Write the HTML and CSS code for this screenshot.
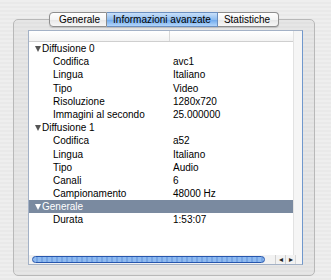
FILE: index.html
```html
<!DOCTYPE html>
<html lang="it">
<head>
  <meta charset="UTF-8">
  <title>Informazioni avanzate</title>
  <link rel="stylesheet" href="styles.css">
</head>
<body>
  <div class="panel">
    <div class="tabs">
      <span class="tab">Generale</span>
      <span class="tab active">Informazioni avanzate</span>
      <span class="tab">Statistiche</span>
    </div>

    <div class="table">
      <div class="table-body">
        <div class="content">
          <div class="header"><span class="hcol"></span><span></span></div>

          <div class="row group"><span class="key"><i class="arrow-down"></i>Diffusione 0</span></div>
          <div class="row"><span class="key">Codifica</span><span class="value">avc1</span></div>
          <div class="row"><span class="key">Lingua</span><span class="value">Italiano</span></div>
          <div class="row"><span class="key">Tipo</span><span class="value">Video</span></div>
          <div class="row"><span class="key">Risoluzione</span><span class="value">1280x720</span></div>
          <div class="row"><span class="key">Immagini al secondo</span><span class="value">25.000000</span></div>

          <div class="row group"><span class="key"><i class="arrow-down"></i>Diffusione 1</span></div>
          <div class="row"><span class="key">Codifica</span><span class="value">a52</span></div>
          <div class="row"><span class="key">Lingua</span><span class="value">Italiano</span></div>
          <div class="row"><span class="key">Tipo</span><span class="value">Audio</span></div>
          <div class="row"><span class="key">Canali</span><span class="value">6</span></div>
          <div class="row"><span class="key">Campionamento</span><span class="value">48000 Hz</span></div>

          <div class="row group selected"><span class="key"><i class="arrow-down"></i>Generale</span></div>
          <div class="row"><span class="key">Durata</span><span class="value">1:53:07</span></div>
        </div>
        <div class="vtrack"></div>
      </div>

      <div class="hscroll">
        <div class="trough"><div class="thumb"></div></div>
        <span class="step">&#9666;</span>
        <span class="step">&#9656;</span>
        <span class="corner"></span>
      </div>
    </div>
  </div>
</body>
</html>
```

FILE: styles.css
```css
body {
  margin: 0;
  width: 331px;
  height: 280px;
  overflow: hidden;
  font-family: 'Liberation Sans', Arial, sans-serif;
  font-size: 10px;
  color: #000;
  background: repeating-linear-gradient(#eeeeee 0 2px, #e9e9e9 2px 4px);
}

.panel {
  margin: 19px 16px 0 13px;
  height: 255px;
  border: 1px solid #b8b8b8;
  border-radius: 5px;
  background: repeating-linear-gradient(#e6e6e6 0 2px, #e1e1e1 2px 4px);
  display: flex;
  flex-direction: column;
}

/* tabs sit across the top border */
.tabs {
  display: flex;
  justify-content: center;
  margin-top: -8px;
  height: 15px;
}

.tab {
  height: 13px;
  line-height: 13px;
  padding: 0 6px;
  border: 1px solid #8e8e8e;
  border-left: none;
  background: linear-gradient(#ffffff, #f4f4f4 50%, #e6e6e6 51%, #f7f7f7);
  box-shadow: 0 1px 1px rgba(0, 0, 0, 0.15);
}

.tab:first-child {
  border-left: 1px solid #8e8e8e;
  border-radius: 4px 0 0 4px;
  padding-left: 9px;
}

.tab:last-child {
  border-radius: 0 4px 4px 0;
  padding-right: 8px;
}

.tab.active {
  border-color: #6b8fc0;
  background: linear-gradient(#c9e0f9, #8fbdf0 50%, #6aa6ec 51%, #b3d6fb);
}

.table {
  flex: 1;
  margin: 3px 11px 10px 14px;
  border: 1px solid #a3b1c6;
  border-right-color: #6f97cc;
  background: #fff;
  display: flex;
  flex-direction: column;
}

.table-body {
  flex: 1;
  display: flex;
}

.content {
  flex: 1;
}

.header {
  display: grid;
  grid-template-columns: 141px 1fr;
  height: 10px;
  border-bottom: 1px solid #cfcfcf;
  background: linear-gradient(#ffffff, #f3f3f3);
}

.hcol {
  border-right: 1px solid #d8d8d8;
}

.row {
  display: grid;
  grid-template-columns: 141px 1fr;
  height: 13.2px;
  line-height: 14px;
  white-space: nowrap;
}

.key {
  padding-left: 24px;
}

.value {
  padding-left: 3px;
}

.group .key {
  padding-left: 6px;
}

.arrow-down {
  display: inline-block;
  width: 0;
  height: 0;
  margin-right: 1px;
  border-left: 3.5px solid transparent;
  border-right: 3.5px solid transparent;
  border-top: 6px solid #555;
}

.selected {
  background: #7a8aa0;
  color: #fff;
}

.selected .arrow-down {
  border-top-color: #fff;
}

.vtrack {
  width: 8px;
  background: #f5f5f5;
  border-left: 1px solid #e2e2e2;
}

.hscroll {
  display: flex;
  align-items: center;
  height: 9px;
  background: #f2f2f2;
}

.trough {
  width: 243px;
  height: 9px;
  display: flex;
  align-items: center;
  padding-left: 3px;
}

.thumb {
  width: 231px;
  height: 5px;
  border: 1px solid #2656ad;
  border-radius: 4px;
  background: repeating-linear-gradient(90deg, #8fbaf0 0 3px, #76a6e6 3px 5px);
}

.step {
  width: 9px;
  font-size: 8px;
  line-height: 9px;
  text-align: center;
  color: #222;
  border-left: 1px solid #cfcfcf;
}

.corner {
  flex: 1;
  height: 9px;
  border-left: 1px solid #d8d8d8;
  background: #f5f5f5;
}
```
